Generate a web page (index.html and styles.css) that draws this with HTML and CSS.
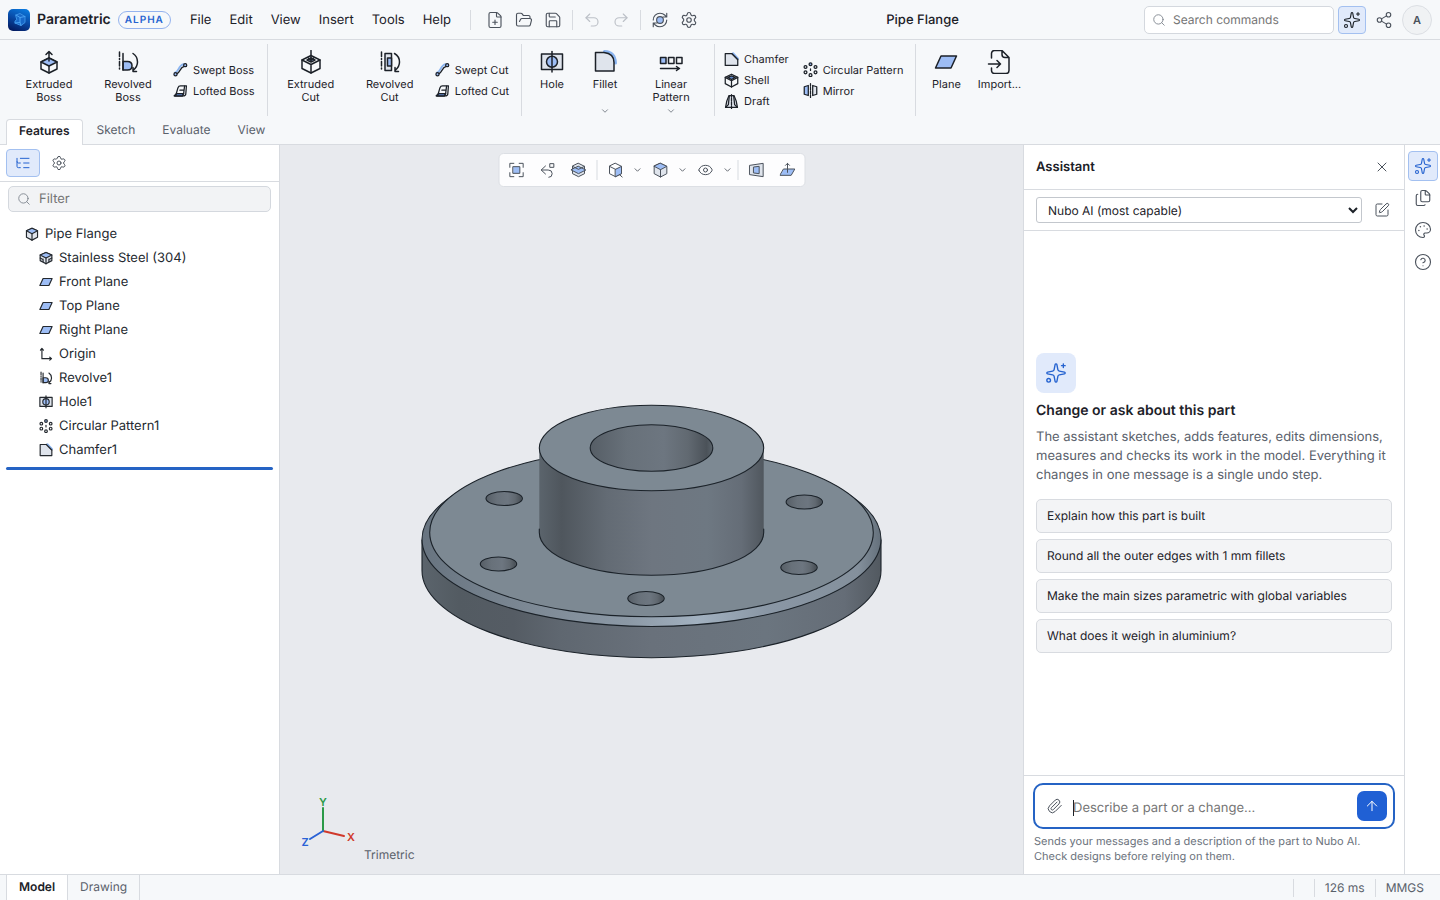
FILE: index.html
```html
<!DOCTYPE html>
<html lang="en">
<head>
<meta charset="utf-8">
<title>Pipe Flange - Parametric</title>
<meta name="viewport" content="width=device-width, initial-scale=1">
<link rel="stylesheet" href="styles.css">
</head>
<body>
<svg class="sprite" aria-hidden="true">
  <symbol id="i-file-plus" viewBox="0 0 24 24"><path d="M6 22a2 2 0 0 1-2-2V4a2 2 0 0 1 2-2h8a2.4 2.4 0 0 1 1.704.706l3.588 3.588A2.4 2.4 0 0 1 20 8v12a2 2 0 0 1-2 2z"/><path d="M14 2v5a1 1 0 0 0 1 1h5M9 15h6M12 18v-6"/></symbol>
  <symbol id="i-folder" viewBox="0 0 24 24"><path d="m6 14 1.5-2.9A2 2 0 0 1 9.24 10H20a2 2 0 0 1 1.94 2.5l-1.54 6a2 2 0 0 1-1.95 1.5H4a2 2 0 0 1-2-2V5a2 2 0 0 1 2-2h3.9a2 2 0 0 1 1.69.9l.81 1.2a2 2 0 0 0 1.67.9H18a2 2 0 0 1 2 2v2"/></symbol>
  <symbol id="i-save" viewBox="0 0 24 24"><path d="M15.2 3a2 2 0 0 1 1.4.6l3.8 3.8a2 2 0 0 1 .6 1.4V19a2 2 0 0 1-2 2H5a2 2 0 0 1-2-2V5a2 2 0 0 1 2-2z"/><path d="M17 21v-7a1 1 0 0 0-1-1H8a1 1 0 0 0-1 1v7M7 3v4a1 1 0 0 0 1 1h7"/></symbol>
  <symbol id="i-undo" viewBox="0 0 24 24"><path d="M9 14 4 9l5-5"/><path d="M4 9h10.5a5.5 5.5 0 0 1 0 11H11"/></symbol>
  <symbol id="i-redo" viewBox="0 0 24 24"><path d="m15 14 5-5-5-5"/><path d="M20 9H9.500a5.500 5.500 0 0 0 0 11H13"/></symbol>
  <symbol id="i-rebuild" viewBox="0 0 24 24"><circle class="f" cx="12" cy="12" r="4.500"/><path d="M3 12a9 9 0 0 1 9-9c2.500 0 4.900 1 6.700 2.700L21 8M21 3v5h-5M21 12a9 9 0 0 1-9 9c-2.500 0-4.900-1-6.700-2.700L3 16M8 16H3v5"/></symbol>
  <symbol id="i-gear" viewBox="0 0 24 24"><path d="M9.671 4.136a2.34 2.34 0 0 1 4.659 0 2.34 2.34 0 0 0 3.319 1.915 2.34 2.34 0 0 1 2.33 4.033 2.34 2.34 0 0 0 0 3.831 2.34 2.34 0 0 1-2.33 4.033 2.34 2.34 0 0 0-3.319 1.915 2.34 2.34 0 0 1-4.659 0 2.34 2.34 0 0 0-3.32-1.915 2.34 2.34 0 0 1-2.33-4.033 2.34 2.34 0 0 0 0-3.831A2.34 2.34 0 0 1 6.35 6.051a2.34 2.34 0 0 0 3.319-1.915"/><circle cx="12" cy="12" r="3"/></symbol>
  <symbol id="i-search" viewBox="0 0 24 24"><circle cx="11" cy="11" r="8"/><path d="m21 21-4.340-4.340"/></symbol>
  <symbol id="i-sparkles" viewBox="0 0 24 24"><path d="M11.017 2.814a1 1 0 0 1 1.966 0l1.051 5.558a2 2 0 0 0 1.594 1.594l5.558 1.051a1 1 0 0 1 0 1.966l-5.558 1.051a2 2 0 0 0-1.594 1.594l-1.051 5.558a1 1 0 0 1-1.966 0l-1.051-5.558a2 2 0 0 0-1.594-1.594l-5.558-1.051a1 1 0 0 1 0-1.966l5.558-1.051a2 2 0 0 0 1.594-1.594z"/><path d="M20 2v4M22 4h-4"/><circle cx="4" cy="20" r="2"/></symbol>
  <symbol id="i-share" viewBox="0 0 24 24"><circle cx="18" cy="5" r="3"/><circle cx="6" cy="12" r="3"/><circle cx="18" cy="19" r="3"/><path d="m8.590 13.510 6.830 3.980M15.410 6.510 8.590 10.490"/></symbol>
  <symbol id="i-chev" viewBox="0 0 24 24"><path d="m6 9 6 6 6-6"/></symbol>
  <symbol id="i-x" viewBox="0 0 24 24"><path d="M18 6 6 18M6 6l12 12"/></symbol>
  <symbol id="i-pen" viewBox="0 0 24 24"><path d="M12 3H5a2 2 0 0 0-2 2v14a2 2 0 0 0 2 2h14a2 2 0 0 0 2-2v-7"/><path d="M18.375 2.625a1 1 0 0 1 3 3l-9.013 9.014a2 2 0 0 1-.853.505l-2.873.84a.5.5 0 0 1-.62-.62l.84-2.873a2 2 0 0 1 .506-.852z"/></symbol>
  <symbol id="i-files" viewBox="0 0 24 24"><path d="M15 2h-4a2 2 0 0 0-2 2v11a2 2 0 0 0 2 2h8a2 2 0 0 0 2-2V8"/><path d="M16.706 2.706A2.400 2.400 0 0 0 15 2v5a1 1 0 0 0 1 1h5a2.400 2.400 0 0 0-.706-1.706z"/><path d="M5 7a2 2 0 0 0-2 2v11a2 2 0 0 0 2 2h8a2 2 0 0 0 1.732-1"/></symbol>
  <symbol id="i-palette" viewBox="0 0 24 24"><path d="M12 22a1 1 0 0 1 0-20 10 9 0 0 1 10 9 5 5 0 0 1-5 5h-2.250a1.750 1.750 0 0 0-1.400 2.800l.3.400a1.750 1.750 0 0 1-1.400 2.800z"/><circle class="d" cx="13.500" cy="6.500" r="1"/><circle class="d" cx="17.500" cy="10.500" r="1"/><circle class="d" cx="6.500" cy="12.500" r="1"/><circle class="d" cx="8.500" cy="7.500" r="1"/></symbol>
  <symbol id="i-help" viewBox="0 0 24 24"><circle cx="12" cy="12" r="10"/><path d="M9.090 9a3 3 0 0 1 5.830 1c0 2-3 3-3 3M12 17h.01"/></symbol>
  <symbol id="i-clip" viewBox="0 0 24 24"><path d="m21.440 11.050-9.190 9.190a6 6 0 0 1-8.490-8.490l8.570-8.570A4 4 0 1 1 18 8.840l-8.590 8.570a2 2 0 0 1-2.830-2.830l8.490-8.480"/></symbol>
  <symbol id="i-up" viewBox="0 0 24 24"><path d="m5 12 7-7 7 7M12 19V5"/></symbol>
  <symbol id="i-tree" viewBox="0 0 24 24"><path d="M8 5h13M13 12h8M13 19h8M3 10a2 2 0 0 0 2 2h3M3 5v12a2 2 0 0 0 2 2h3"/></symbol>
  <symbol id="i-eye" viewBox="0 0 24 24"><path d="M2.062 12.348a1 1 0 0 1 0-.696 10.750 10.750 0 0 1 19.876 0 1 1 0 0 1 0 .696 10.750 10.750 0 0 1-19.876 0"/><circle cx="12" cy="12" r="3"/></symbol>

  <symbol id="i-exboss" viewBox="0 0 24 24"><path d="M12 8l8 4v7l-8 4-8-4v-7z"/><path class="f" d="M12 8l8 4-8 4-8-4z"/><path d="M12 16v7M12 11V2M9 4.500l3-3 3 3"/></symbol>
  <symbol id="i-revboss" viewBox="0 0 24 24"><path stroke-dasharray="4.500 2 1 2" d="M3.500 2v19"/><path class="f" d="M7 11.500h4.500q4.500 0 4.500 4.250T11.500 20H7z"/><path d="M7 3.500V20M17 3.500q4.500 3 4.500 8.500 0 4.500-4 8M17 17.500v4h3.500"/></symbol>
  <symbol id="i-excut" viewBox="0 0 24 24"><path d="M12 5.500l9 4.500v8.500L12 23l-9-4.500V10z"/><path d="M3 10l9 4.500 9-4.500M12 14.500V23"/><path class="f" d="M12 8l4 2-4 2-4-2z"/><path d="M12 .5V10M9.500 8l2.500 2.500L14.500 8"/></symbol>
  <symbol id="i-revcut" viewBox="0 0 24 24"><path stroke-dasharray="4.500 2 1 2" d="M3.500 2v19"/><path class="g" d="M7 3.500h6.500v17H7z"/><path class="f" d="M9.500 8h4v8h-4z"/><path d="M16.500 3.500q5 3 5 8.500 0 4.500-4 8M17 17.500v4h3.500"/></symbol>
  <symbol id="i-sweep" viewBox="0 0 24 24"><path class="b" d="M3 17C10 15.500 8 5.500 17 3.500"/><path d="M5.500 19.500C12 17 10.500 8.500 18 7"/><circle class="f" cx="4" cy="19.500" r="2.500"/><circle class="f" cx="19.500" cy="5" r="2.500"/></symbol>
  <symbol id="i-loft" viewBox="0 0 24 24"><path class="g" d="M2 20.500h13.500L17 17H5z"/><path d="M2 20.500h14q4.500 0 4.500-3.500l1-12.500H12Q9 4.500 8 7.500L5.500 16"/><path d="M11 11.500h6M17 17l1.500-12"/><path class="n" d="M3.500 20.500L6 17h10.500l-1.500 3.500z"/></symbol>
  <symbol id="i-hole" viewBox="0 0 24 24"><path class="g" d="M1.500 4h21v15.500h-21z"/><circle class="f" cx="12" cy="11.750" r="5.500"/><path d="M12 1.500v20.500"/></symbol>
  <symbol id="i-fillet" viewBox="0 0 24 24"><path class="b" d="M11.500 1.500Q22 2 22.500 13"/><path class="g" d="M2.500 2.500H11q10 1 10 10v8.500H2.500z"/></symbol>
  <symbol id="i-linpat" viewBox="0 0 24 24"><path class="f" d="M1.500 7.500H7v6H1.500z"/><path d="M9.500 7.500H15v6H9.500zM17.500 7.500H23v6h-5.500zM1.500 18.500H20M17.500 16.500l3 2-3 2"/></symbol>
  <symbol id="i-chamfer" viewBox="0 0 24 24"><path class="g" d="M2 2.500h10.500L22 12v9.500H2z"/><path class="b" d="M14.500 2l8 8.500"/><path d="M12.500 2.500L22 12"/></symbol>
  <symbol id="i-shell" viewBox="0 0 24 24"><path d="M12 2l10 5v10l-10 5.500L2 17V7z"/><path class="n" d="M12 4.500L18 7l-6 3.500L6 7z"/><path d="M2 7l10 5.500L22 7M12 12.500v10"/></symbol>
  <symbol id="i-draft" viewBox="0 0 24 24"><path class="g" d="M8 2.500h8Q20 10 21.500 21.500h-19Q4 10 8 2.500z"/><path d="M8.500 3L7 17l-4.500 4.500M15.500 3L17 17l4.500 4.500"/><path stroke-dasharray="4 2" d="M12 1v22"/></symbol>
  <symbol id="i-circpat" viewBox="0 0 24 24"><circle class="f" cx="12" cy="3.500" r="2.300"/><circle cx="20" cy="8" r="2.300"/><circle cx="20" cy="16.500" r="2.300"/><circle cx="12" cy="21" r="2.300"/><circle cx="4" cy="16.500" r="2.300"/><circle cx="4" cy="8" r="2.300"/><path d="M12 11v2.500"/></symbol>
  <symbol id="i-mirror" viewBox="0 0 24 24"><path class="f" d="M2 6l6.500-2v16L2 18z"/><path class="g" d="M22 6l-6.500-2v16l6.500-2z"/><path stroke-dasharray="4 2" d="M12 1v22"/></symbol>
  <symbol id="i-plane" viewBox="0 0 24 24"><path class="f" d="M7 6h15.500L17 18H1.500z"/></symbol>
  <symbol id="i-import" viewBox="0 0 24 24"><path d="M4.500 8V3.500a3 3 0 0 1 3-3H15l7 7v13a3 3 0 0 1-3 3H7.500a3 3 0 0 1-3-3V18M15 .5v4a3 3 0 0 0 3 3h4M1.500 14h12M10 10.500l3.500 3.500-3.500 3.500"/></symbol>
  <symbol id="i-cube" viewBox="0 0 24 24"><path class="g" d="M12 2l9.500 4.500v11L12 22.500l-9.500-5v-11z"/><path class="f" d="M12 2l9.500 4.500L12 11.500 2.500 6.500z"/><path d="M12 11.500v11"/></symbol>
  <symbol id="i-material" viewBox="0 0 24 24"><path class="g" d="M12 2.500L22 7v9.500L12 22 2 16.500V7z"/><path class="f" d="M12 2.500L22 7l-10 5L2 7z"/><path d="M12 12v10M2 12l4 2M22 12l-4 2M7 18v-4M17 18v-4"/></symbol>
  <symbol id="i-origin" viewBox="0 0 24 24"><path d="M5 3v17h16M2.500 5.500L5 2.500l2.500 3M18.500 17.500l3 2.500-3 2.500"/></symbol>
  <symbol id="i-fit" viewBox="0 0 24 24"><path class="f" d="M7 7h10v10H7z"/><path d="M2 8V2h6M16 2h6v6M22 16v6h-6M8 22H2v-6"/></symbol>
  <symbol id="i-prev" viewBox="0 0 24 24"><path d="M9 6l-6.500 6L9 18M3 12h10q6 0 6 5.500T14 23M16 2.500h5.500V8H16z"/></symbol>
  <symbol id="i-section" viewBox="0 0 24 24"><path class="g" d="M12 2l9 4.500v11L12 22l-9-4.500v-11z"/><path class="f" d="M12 6.500L23 12l-11 5.500L1 12z"/><path d="M3 6.500l9 4.500 9-4.500"/></symbol>
  <symbol id="i-orient" viewBox="0 0 24 24"><path d="M12 2l9 4.500v11L12 22l-9-4.500v-11z"/><path class="f" d="M12 11l9-4.500v11L12 22z"/><path d="M3 6.500l9 4.500M18 19l4 3.500"/></symbol>
  <symbol id="i-persp" viewBox="0 0 24 24"><path class="g" d="M2 5l20-3v20L2 19z"/><path class="f" d="M8 7.500l8-1v11l-8-1z"/></symbol>
  <symbol id="i-normal" viewBox="0 0 24 24"><path class="f" d="M6.500 10.500H23L17.500 20H1z"/><path d="M12 15.500V2M9 5l3-3 3 3"/></symbol>
</svg>

<div class="app">
  <header class="topbar">
    <svg class="logo" viewBox="0 0 22 22" aria-hidden="true">
      <defs><linearGradient id="lg" x1=".7" y1="0" x2=".3" y2="1"><stop offset="0" stop-color="#0b78dc"/><stop offset=".5" stop-color="#0849a5"/><stop offset="1" stop-color="#041c62"/></linearGradient></defs>
      <rect width="22" height="22" rx="5" fill="url(#lg)" stroke="none"/>
      <path d="M8 6l4-1.500 5 3v6l-4 3-6-2.500V12l1.500-1z" fill="#1768c9" stroke="#3a92e6"/>
      <path d="M8 6l4 2.500 5-1M12 8.500v5l-5 .5M12 13.500l1 3" fill="none" stroke="#4aa3f3"/>
    </svg>
    <span class="brand">Parametric</span>
    <span class="badge">ALPHA</span>
    <nav class="menu" aria-label="Main menu">
      <button>File</button><button>Edit</button><button>View</button><button>Insert</button><button>Tools</button><button>Help</button>
    </nav>
    <span class="vsep"></span>
    <div class="quick">
      <button aria-label="New"><svg class="ic"><use href="#i-file-plus"/></svg></button>
      <button aria-label="Open"><svg class="ic"><use href="#i-folder"/></svg></button>
      <button aria-label="Save"><svg class="ic"><use href="#i-save"/></svg></button>
      <span class="vsep"></span>
      <button aria-label="Undo" disabled><svg class="ic"><use href="#i-undo"/></svg></button>
      <button aria-label="Redo" disabled><svg class="ic"><use href="#i-redo"/></svg></button>
      <span class="vsep"></span>
      <button aria-label="Rebuild"><svg class="ic"><use href="#i-rebuild"/></svg></button>
      <button aria-label="Settings"><svg class="ic"><use href="#i-gear"/></svg></button>
    </div>
    <h1 class="doc">Pipe Flange</h1>
    <label class="search"><svg class="ic"><use href="#i-search"/></svg><input type="search" placeholder="Search commands" aria-label="Search commands"></label>
    <button class="square on dark" aria-label="Assistant"><svg class="ic"><use href="#i-sparkles"/></svg></button>
    <button class="square" aria-label="Share"><svg class="ic"><use href="#i-share"/></svg></button>
    <button class="avatar" aria-label="Account">A</button>
  </header>

  <div class="ribbon">
    <div class="groups">
      <div class="group">
        <button class="big wide"><svg><use href="#i-exboss"/></svg><span>Extruded Boss</span></button>
        <button class="big wide"><svg><use href="#i-revboss"/></svg><span>Revolved Boss</span></button>
        <div class="stack">
          <button><svg><use href="#i-sweep"/></svg>Swept Boss</button>
          <button><svg><use href="#i-loft"/></svg>Lofted Boss</button>
        </div>
      </div>
      <div class="group">
        <button class="big wide"><svg><use href="#i-excut"/></svg><span>Extruded Cut</span></button>
        <button class="big wide"><svg><use href="#i-revcut"/></svg><span>Revolved Cut</span></button>
        <div class="stack">
          <button><svg><use href="#i-sweep"/></svg>Swept Cut</button>
          <button><svg><use href="#i-loft"/></svg>Lofted Cut</button>
        </div>
      </div>
      <div class="group">
        <button class="big"><svg><use href="#i-hole"/></svg><span>Hole</span></button>
        <button class="big"><svg><use href="#i-fillet"/></svg><span>Fillet</span><svg class="more"><use href="#i-chev"/></svg></button>
        <button class="big wide"><svg><use href="#i-linpat"/></svg><span>Linear Pattern</span><svg class="more"><use href="#i-chev"/></svg></button>
      </div>
      <div class="group">
        <div class="stack">
          <button><svg><use href="#i-chamfer"/></svg>Chamfer</button>
          <button><svg><use href="#i-shell"/></svg>Shell</button>
          <button><svg><use href="#i-draft"/></svg>Draft</button>
        </div>
        <div class="stack">
          <button><svg><use href="#i-circpat"/></svg>Circular Pattern</button>
          <button><svg><use href="#i-mirror"/></svg>Mirror</button>
        </div>
      </div>
      <div class="group">
        <button class="big"><svg><use href="#i-plane"/></svg><span>Plane</span></button>
        <button class="big"><svg><use href="#i-import"/></svg><span>Import...</span></button>
      </div>
    </div>
    <div class="tabs" role="tablist">
      <button role="tab" aria-selected="true" class="active">Features</button><button role="tab">Sketch</button><button role="tab">Evaluate</button><button role="tab">View</button>
    </div>
  </div>

  <main class="work">
    <aside class="side">
      <div class="side-tabs">
        <button class="on" aria-label="Feature tree"><svg class="ic"><use href="#i-tree"/></svg></button>
        <button aria-label="Properties"><svg class="ic"><use href="#i-gear"/></svg></button>
      </div>
      <label class="filter"><svg class="ic"><use href="#i-search"/></svg><input type="text" placeholder="Filter" aria-label="Filter"></label>
      <ul class="tree">
        <li class="root"><svg><use href="#i-cube"/></svg>Pipe Flange</li>
        <li><svg><use href="#i-material"/></svg>Stainless Steel (304)</li>
        <li><svg><use href="#i-plane"/></svg>Front Plane</li>
        <li><svg><use href="#i-plane"/></svg>Top Plane</li>
        <li><svg><use href="#i-plane"/></svg>Right Plane</li>
        <li><svg><use href="#i-origin"/></svg>Origin</li>
        <li><svg><use href="#i-revboss"/></svg>Revolve1</li>
        <li><svg><use href="#i-hole"/></svg>Hole1</li>
        <li><svg><use href="#i-circpat"/></svg>Circular Pattern1</li>
        <li><svg><use href="#i-chamfer"/></svg>Chamfer1</li>
      </ul>
      <div class="rollback"></div>
    </aside>

    <section class="view" aria-label="Model view">
      <svg class="model" viewBox="280 145 743 729" role="img" aria-label="Pipe flange">
        <defs>
          <linearGradient id="wall"><stop offset="0" stop-color="#5b646c"/><stop offset=".08" stop-color="#535b62"/><stop offset=".2" stop-color="#555c64"/><stop offset=".3" stop-color="#5f6770"/><stop offset=".5" stop-color="#69717b"/><stop offset=".75" stop-color="#6b757f"/><stop offset=".92" stop-color="#656d77"/><stop offset="1" stop-color="#525960"/></linearGradient>
          <linearGradient id="hub"><stop offset="0" stop-color="#5b646c"/><stop offset=".1" stop-color="#4f565d"/><stop offset=".3" stop-color="#636b74"/><stop offset=".5" stop-color="#6e7680"/><stop offset=".75" stop-color="#6e7882"/><stop offset=".9" stop-color="#656d77"/><stop offset="1" stop-color="#50575e"/></linearGradient>
          <linearGradient id="bore"><stop offset="0" stop-color="#565e66"/><stop offset=".3" stop-color="#68717a"/><stop offset=".6" stop-color="#6d7680"/><stop offset=".8" stop-color="#616971"/><stop offset=".95" stop-color="#4b5259"/><stop offset="1" stop-color="#5a636b"/></linearGradient>
          <linearGradient id="rim"><stop offset="0" stop-color="#687480"/><stop offset=".25" stop-color="#7e8a96"/><stop offset=".45" stop-color="#8c99a6"/><stop offset=".6" stop-color="#a2b1c0"/><stop offset=".75" stop-color="#8a97a5"/><stop offset=".95" stop-color="#84909c"/><stop offset="1" stop-color="#64707b"/></linearGradient>
        </defs>
        <g stroke="#1b2229" stroke-width="1.100">
          <path fill="url(#wall)" d="M422 540V570.400A229.500 87.300 0 0 0 881 570.400V540"/>
          <ellipse fill="url(#rim)" cx="651.500" cy="539.200" rx="229.500" ry="87.300"/>
          <ellipse fill="#7d8993" cx="651.500" cy="532.400" rx="221.800" ry="84.400"/>
          <g fill="url(#bore)">
            <ellipse cx="504.200" cy="498.500" rx="18.200" ry="7"/><ellipse cx="804.300" cy="502" rx="18.200" ry="7"/><ellipse cx="498.500" cy="564" rx="18.200" ry="7"/><ellipse cx="799" cy="567.500" rx="18.200" ry="7"/><ellipse cx="646" cy="598.500" rx="18.200" ry="7"/>
          </g>
          <path fill="url(#hub)" stroke="none" d="M539.300 448V532.600A112.200 42.700 0 0 0 763.700 532.600V448z"/>
          <path fill="none" d="M539.300 529V532.600A112.200 42.700 0 0 0 763.700 532.600V529"/>
          <ellipse fill="#7d8993" cx="651.500" cy="448" rx="112.200" ry="42.700"/>
          <ellipse fill="url(#bore)" cx="651.500" cy="448" rx="61.300" ry="23.200"/>
        </g>
      </svg>
      <div class="view-tools" role="toolbar" aria-label="View tools">
        <button aria-label="Zoom to fit"><svg class="ic"><use href="#i-fit"/></svg></button>
        <button aria-label="Previous view"><svg class="ic"><use href="#i-prev"/></svg></button>
        <button aria-label="Section view"><svg class="ic"><use href="#i-section"/></svg></button>
        <span class="vsep"></span>
        <button aria-label="Orientation"><svg class="ic"><use href="#i-orient"/></svg></button>
        <button class="drop" aria-label="Orientation options"><svg class="ic"><use href="#i-chev"/></svg></button>
        <button aria-label="Display style"><svg class="ic"><use href="#i-cube"/></svg></button>
        <button class="drop" aria-label="Display style options"><svg class="ic"><use href="#i-chev"/></svg></button>
        <button aria-label="Visibility"><svg class="ic"><use href="#i-eye"/></svg></button>
        <button class="drop" aria-label="Visibility options"><svg class="ic"><use href="#i-chev"/></svg></button>
        <span class="vsep"></span>
        <button aria-label="Perspective"><svg class="ic"><use href="#i-persp"/></svg></button>
        <button aria-label="Normal to"><svg class="ic"><use href="#i-normal"/></svg></button>
      </div>
      <div class="hud">
        <svg class="triad" viewBox="0 0 64 64" role="img" aria-label="Axes">
          <g fill="none" stroke-width="2"><path stroke="#d0392b" d="M23 37l21 5"/><path stroke="#2b9a48" d="M23 37V14"/><path stroke="#2a62d6" d="M23 37l-13 8"/></g>
          <text x="23" y="12" fill="#2b9a48">Y</text><text x="51" y="47" fill="#d0392b">X</text><text x="5" y="52" fill="#2a62d6">Z</text>
        </svg>
        <span>Trimetric</span>
      </div>
    </section>

    <section class="assistant" aria-label="Assistant">
      <div class="as-head"><h2>Assistant</h2><button aria-label="Close"><svg class="ic"><use href="#i-x"/></svg></button></div>
      <div class="as-model">
        <select aria-label="Model"><option>Nubo AI (most capable)</option></select>
        <button aria-label="New chat"><svg class="ic"><use href="#i-pen"/></svg></button>
      </div>
      <div class="as-body">
        <div class="tile"><svg class="ic"><use href="#i-sparkles"/></svg></div>
        <h3>Change or ask about this part</h3>
        <p>The assistant sketches, adds features, edits dimensions, measures and checks its work in the model. Everything it changes in one message is a single undo step.</p>
        <div class="ideas">
          <button>Explain how this part is built</button>
          <button>Round all the outer edges with 1 mm fillets</button>
          <button>Make the main sizes parametric with global variables</button>
          <button>What does it weigh in aluminium?</button>
        </div>
      </div>
      <div class="as-foot">
        <form class="composer">
          <button type="button" class="attach" aria-label="Attach"><svg class="ic"><use href="#i-clip"/></svg></button>
          <label class="field"><input type="text" placeholder="Describe a part or a change..." aria-label="Message" autofocus></label>
          <button type="button" class="send" aria-label="Send"><svg class="ic"><use href="#i-up"/></svg></button>
        </form>
        <p>Sends your messages and a description of the part to Nubo AI. Check designs before relying on them.</p>
      </div>
    </section>

    <nav class="rail" aria-label="Panels">
      <button class="on" aria-label="Assistant"><svg class="ic"><use href="#i-sparkles"/></svg></button>
      <button aria-label="Files"><svg class="ic"><use href="#i-files"/></svg></button>
      <button aria-label="Appearance"><svg class="ic"><use href="#i-palette"/></svg></button>
      <button aria-label="Help"><svg class="ic"><use href="#i-help"/></svg></button>
    </nav>
  </main>

  <footer class="status">
    <button class="active">Model</button><button>Drawing</button>
    <div class="info"><span class="blank"></span><span>126 ms</span><span>MMGS</span></div>
  </footer>
</div>
</body>
</html>
```
FILE: styles.css
```css
* { box-sizing: border-box; }
html, body { height: 100%; }
body { margin: 0; font: 13px/20px Inter, "Liberation Sans", sans-serif; text-rendering: geometricPrecision; color: #1c2128; background: #f6f8fa; }
button, input, select { font: inherit; color: inherit; margin: 0; text-rendering: inherit; }
button { border: 0; background: none; padding: 0; }
h1, h2, h3, p, ul { margin: 0; padding: 0; }
.sprite { display: none; }
svg { fill: none; stroke: currentColor; stroke-width: 2; stroke-linecap: round; stroke-linejoin: round; flex: none; display: block; }
.f { fill: #9dbdf5; }
.g { fill: #dfe4ec; }
.n { fill: #5f86c9; }
.b { stroke: #8ab4f0; stroke-width: 3; }
.d { fill: currentColor; stroke: none; }
.ic { width: 16px; height: 16px; stroke-width: 1.5; }

.app { height: 100%; display: flex; flex-direction: column; overflow: hidden; }
.vsep { width: 1px; height: 20px; background: #d8dbe0; flex: none; }

.topbar { display: flex; align-items: center; height: 40px; padding: 0 8px; border-bottom: 1px solid #d8dbe0; flex: none; }
.quick .ic, .square .ic, .rail .ic { width: 18px; height: 18px; }
.logo { width: 22px; height: 22px; stroke-width: 1; }
.brand { margin-left: 7px; font-size: 14px; font-weight: 600; }
.badge { margin-left: 7px; padding: 0 6px; border: 1px solid #94b3ee; border-radius: 9px; color: #2563d0; font-size: 10px; line-height: 16px; font-weight: 600; letter-spacing: 1px; }
.menu { display: flex; margin: 0 10px; }
.menu button { padding: 4px 9px; }
.quick { display: flex; align-items: center; gap: 1px; margin-left: 10px; color: #4b525c; }
.quick button { width: 28px; height: 28px; display: grid; place-items: center; }
.quick button:disabled { color: #bcc0c7; }
.quick .vsep { margin: 0 4px; }
.doc { flex: 1; padding-right: 2px; text-align: center; font-size: 13px; font-weight: 500; }
.search, .filter { display: flex; align-items: center; gap: 7px; border: 1px solid #d4d8de; border-radius: 5px; color: #7b828c; }
.search { width: 190px; height: 28px; padding: 0 7px; background: #fff; font-size: 12px; }
.search .ic, .filter .ic { width: 14px; height: 14px; }
.search input, .filter input, .composer input { flex: 1; min-width: 0; border: 0; outline: 0; padding: 0; background: none; }
input::placeholder { color: #757575; opacity: 1; }
.square { width: 28px; height: 28px; margin-left: 4px; display: grid; place-items: center; border-radius: 4px; color: #4b525c; }
.on { background: #e1eafb; border: 1px solid #a3c0f0; border-radius: 4px; color: #2563d0; }
.dark { color: #1c2128; }
.avatar { width: 30px; height: 30px; margin-left: 4px; border: 1px solid #dcdfe4; border-radius: 50%; background: #f0f2f4; font-size: 11px; font-weight: 600; color: #4b525c; }

.ribbon { flex: none; border-bottom: 1px solid #d8dbe0; }
.groups { display: flex; padding: 4px 6px 3px; }
.group { display: flex; gap: 1px; height: 72px; padding: 0 4px; border-right: 1px solid #d8dbe0; }
.group:last-child { border: 0; }
.big { display: flex; flex-direction: column; align-items: center; min-width: 52px; padding: 6px 4px 0; font-size: 11px; line-height: 13px; }
.big span { margin-top: 4px; }
.big svg { width: 24px; height: 24px; stroke-width: 1.5; }
.big .more { width: 10px; height: 10px; margin-top: auto; color: #6b727c; stroke-width: 2; }
.wide { width: 78px; }
.wide span { width: 52px; }
.stack { display: flex; flex-direction: column; justify-content: center; }
.stack button { display: flex; align-items: center; gap: 5px; height: 21px; padding: 0 8px 0 5px; font-size: 11px; }
.stack svg { width: 15px; height: 15px; }
.tabs { display: flex; gap: 1px; padding-left: 6px; }
.tabs button { height: 25px; padding: 0 13px 3px; color: #5a616b; font-size: 12px; }
.tabs .active { margin-bottom: -1px; height: 26px; padding: 0 12px 3px; background: #fff; border: 1px solid #d8dbe0; border-bottom: 0; border-radius: 4px 4px 0 0; color: #1c2128; font-weight: 600; }

.work { flex: 1; min-height: 0; display: flex; }
.side { width: 280px; flex: none; background: #fff; border-right: 1px solid #d8dbe0; }
.side-tabs { display: flex; gap: 2px; padding: 4px 6px; border-bottom: 1px solid #d8dbe0; }
.side-tabs button { width: 34px; height: 28px; display: grid; place-items: center; color: #4b525c; }
.side-tabs .on { color: #2563d0; }
.filter { margin: 4px 8px 10px; height: 26px; padding: 0 8px; gap: 8px; background: #f2f3f5; }
.tree { list-style: none; }
.tree li { display: flex; align-items: center; gap: 6px; height: 24px; padding-left: 39px; color: #24292f; }
.tree .root { padding-left: 25px; }
.tree svg { width: 14px; height: 14px; }
.rollback { height: 3px; margin: 5px 6px; border-radius: 2px; background: #2563c4; }

.view { position: relative; flex: 1; min-width: 0; background: #e8eaee; }
.model { width: 100%; height: 100%; }
.view-tools { position: absolute; top: 8px; left: 50%; transform: translateX(-50%); display: flex; align-items: center; gap: 1px; padding: 1px 2px; background: #fdfdfe; border: 1px solid #dcdfe4; border-radius: 5px; color: #4b525c; }
.view-tools button { width: 30px; height: 30px; display: grid; place-items: center; }
.view-tools .drop { width: 13px; }
.drop .ic { width: 10px; height: 10px; stroke-width: 2; }
.view-tools .vsep { margin: 0 2px; }
.hud { position: absolute; left: 20px; bottom: 9px; display: flex; align-items: flex-end; color: #5a616b; font-size: 12px; }
.triad { width: 64px; height: 64px; margin-bottom: 7px; overflow: visible; }
.triad text { font-size: 11px; font-weight: 600; text-anchor: middle; stroke: none; }

.assistant { width: 381px; flex: none; display: flex; flex-direction: column; background: #fff; border-left: 1px solid #d8dbe0; }
.as-head, .as-model { display: flex; align-items: center; justify-content: space-between; padding: 0 8px 0 12px; border-bottom: 1px solid #d8dbe0; }
.as-head { height: 45px; }
.as-head h2 { font-size: 13px; font-weight: 600; }
.as-model { height: 41px; gap: 6px; }
.as-head button, .as-model button { width: 28px; height: 28px; display: grid; place-items: center; color: #4b525c; }
.as-model select { flex: 1; height: 26px; padding: 0 0 0 7px; border: 1px solid #c3c7cd; border-radius: 3px; background: #fff; font-size: 12px; }
.as-body { flex: 1; display: flex; flex-direction: column; justify-content: center; padding: 0 12px; }
.tile { width: 40px; height: 40px; display: grid; place-items: center; border-radius: 8px; background: #e1eafb; color: #2563d0; }
.tile .ic { width: 22px; height: 22px; }
.as-body h3 { margin-top: 8px; font-size: 14px; font-weight: 600; }
.as-body p { margin-top: 7px; line-height: 19px; color: #5a616b; }
.ideas { display: flex; flex-direction: column; gap: 6px; margin-top: 14px; }
.ideas button { height: 34px; padding: 0 10px; text-align: left; border: 1px solid #d8dbe0; border-radius: 5px; background: #f3f4f6; font-size: 12px; }
.as-foot { padding: 7px 9px 10px; border-top: 1px solid #d8dbe0; font-size: 11px; line-height: 15px; color: #6b727c; }
.as-foot p { padding: 5px 1px 0; }
.composer { display: flex; align-items: center; height: 46px; padding: 0 6px; border: 2px solid #2563c4; border-radius: 10px; font-size: 13px; }
.field { position: relative; flex: 1; display: flex; margin-left: 4px; padding-top: 4px; color: #1c2128; }
.field input { caret-color: transparent; }
.field:focus-within::before { content: ""; position: absolute; left: 0; top: 3px; width: 1px; height: 16px; background: #1c2128; }
.attach { width: 28px; height: 28px; display: grid; place-items: center; color: #4b525c; }
.send { width: 30px; height: 30px; display: grid; place-items: center; border-radius: 7px; background: #2060d4; color: #fff; }
.send .ic { width: 16px; height: 16px; }

.rail { width: 36px; flex: none; display: flex; flex-direction: column; align-items: flex-end; gap: 2px; padding: 6px 2px; background: #fff; border-left: 1px solid #d8dbe0; }
.rail button { width: 30px; height: 30px; display: grid; place-items: center; color: #4b525c; }
.rail .on { color: #2563d0; }

.status { flex: none; display: flex; height: 26px; padding-left: 6px; border-top: 1px solid #d8dbe0; font-size: 12px; color: #5a616b; }
.status button { padding: 0 12px 1px; border-right: 1px solid #d8dbe0; }
.status .active { background: #fff; border-left: 1px solid #d8dbe0; color: #1c2128; font-weight: 600; }
.info { display: flex; align-items: center; margin-left: auto; padding-right: 6px; }
.info span { height: 18px; line-height: 18px; padding: 0 10px; border-left: 1px solid #d8dbe0; }
```
